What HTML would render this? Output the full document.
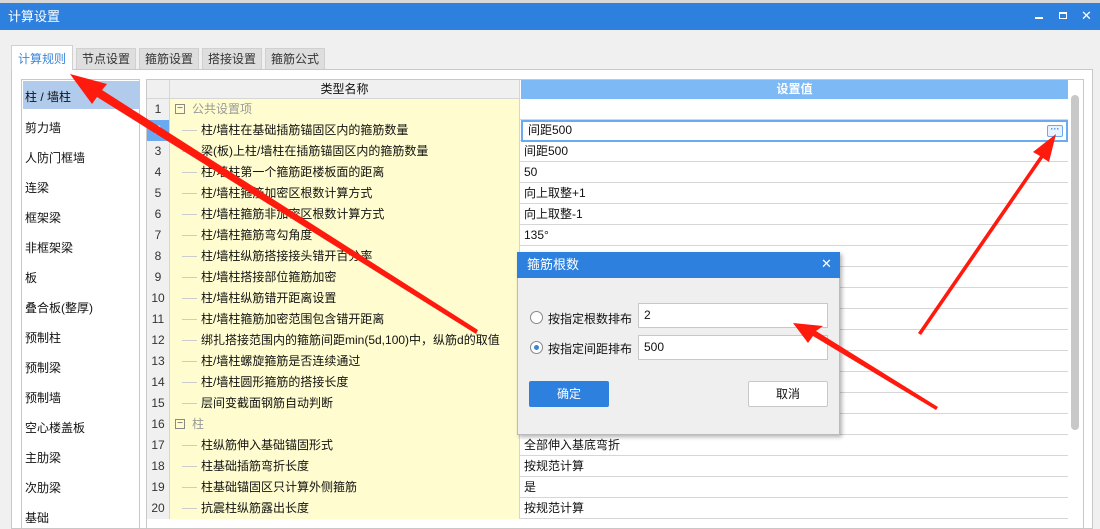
<!DOCTYPE html><html><head><meta charset="utf-8"><style>
*{margin:0;padding:0;box-sizing:border-box}
body{width:1100px;height:517px;overflow:hidden;background:#f0f0f0;font-family:"Liberation Sans","Noto Sans CJK SC",sans-serif;font-size:12px;color:#111;position:relative}
.a{position:absolute}
.tab{position:absolute;top:48px;height:21px;background:#dedede;border:1px solid #d0d0d0;border-bottom:none;text-align:center;line-height:20px;color:#333}
.li{position:absolute;left:25px;font-size:12px}
.row{position:absolute;left:147px;width:921px;height:21px;border-bottom:1px solid #d6d6d6}
.rn{position:absolute;left:0;width:23px;height:21px;background:#f0f0f0;border-right:1px solid #d6d6d6;text-align:center;line-height:21px;color:#333}
.nm{position:absolute;left:23px;width:350px;height:21px;background:#fffdcf;border-right:1px solid #d6d6d6;line-height:21px}
.nm i{position:absolute;left:12px;top:10px;width:15px;border-top:1px solid #ccc}
.nm b{font-weight:normal;position:absolute;left:31px}
.vl{position:absolute;left:374px;line-height:21px;padding-left:3px}
.box{position:absolute;border:1px solid #c8c8c8;background:#fff;padding-left:5px;line-height:23px;font-size:12px}
</style></head><body>
<div class="a" style="left:0;top:0;width:1100px;height:3px;background:#d8d8d8"></div>
<div class="a" style="left:0;top:3px;width:1100px;height:27px;background:#2e80df;color:#fff;font-size:13px;line-height:27px;padding-left:8px">计算设置</div>
<div class="a" style="left:1035px;top:17px;width:8px;height:2px;background:#fff"></div>
<div class="a" style="left:1059px;top:12px;width:8px;height:7px;border:1px solid #fff;border-top-width:2px"></div>
<div class="a" style="left:1081px;top:8px;color:#fff;font-size:13px">✕</div>
<div class="a" style="left:11px;top:69px;width:1082px;height:460px;background:#fff;border:1px solid #c8c8c8"></div>
<div class="tab" style="left:11px;width:62px;top:45px;height:25px;background:#fff;color:#3b86d8;line-height:26px">计算规则</div>
<div class="tab" style="left:76px;width:60px">节点设置</div>
<div class="tab" style="left:139px;width:60px">箍筋设置</div>
<div class="tab" style="left:202px;width:60px">搭接设置</div>
<div class="tab" style="left:265px;width:60px">箍筋公式</div>
<div class="a" style="left:21px;top:79px;width:119px;height:450px;border:1px solid #c8c8c8;background:#fff"></div>
<div class="a" style="left:23px;top:81px;width:116px;height:28px;background:#b1cbec"></div>
<div class="li" style="top:88px">柱 / 墙柱</div>
<div class="li" style="top:119px">剪力墙</div>
<div class="li" style="top:149px">人防门框墙</div>
<div class="li" style="top:179px">连梁</div>
<div class="li" style="top:209px">框架梁</div>
<div class="li" style="top:239px">非框架梁</div>
<div class="li" style="top:269px">板</div>
<div class="li" style="top:299px">叠合板(整厚)</div>
<div class="li" style="top:329px">预制柱</div>
<div class="li" style="top:359px">预制梁</div>
<div class="li" style="top:389px">预制墙</div>
<div class="li" style="top:419px">空心楼盖板</div>
<div class="li" style="top:449px">主肋梁</div>
<div class="li" style="top:479px">次肋梁</div>
<div class="li" style="top:509px">基础</div>
<div class="a" style="left:146px;top:79px;width:938px;height:450px;border:1px solid #c8c8c8;background:#fff"></div>
<div class="a" style="left:147px;top:80px;width:23px;height:19px;background:#f0f0f0;border-right:1px solid #d6d6d6;border-bottom:1px solid #d6d6d6"></div>
<div class="a" style="left:170px;top:80px;width:350px;height:19px;background:#f0f0f0;border-right:1px solid #d6d6d6;border-bottom:1px solid #d6d6d6;text-align:center;line-height:19px">类型名称</div>
<div class="a" style="left:521px;top:80px;width:547px;height:19px;background:#7db9f5;color:#fff;text-align:center;line-height:19px;font-weight:bold">设置值</div>
<div class="a" style="left:1071px;top:95px;width:8px;height:335px;background:#c8c8c8;border-radius:4px"></div>
<div id="rows"></div>
<script>
var d=[["⊟公共设置项",""],["柱/墙柱在基础插筋锚固区内的箍筋数量","间距500"],["梁(板)上柱/墙柱在插筋锚固区内的箍筋数量","间距500"],["柱/墙柱第一个箍筋距楼板面的距离","50"],["柱/墙柱箍筋加密区根数计算方式","向上取整+1"],["柱/墙柱箍筋非加密区根数计算方式","向上取整-1"],["柱/墙柱箍筋弯勾角度","135°"],["柱/墙柱纵筋搭接接头错开百分率",""],["柱/墙柱搭接部位箍筋加密",""],["柱/墙柱纵筋错开距离设置",""],["柱/墙柱箍筋加密范围包含错开距离",""],["绑扎搭接范围内的箍筋间距min(5d,100)中，纵筋d的取值",""],["柱/墙柱螺旋箍筋是否连续通过",""],["柱/墙柱圆形箍筋的搭接长度",""],["层间变截面钢筋自动判断",""],["⊟柱",""],["柱纵筋伸入基础锚固形式","全部伸入基底弯折"],["柱基础插筋弯折长度","按规范计算"],["柱基础锚固区只计算外侧箍筋","是"],["抗震柱纵筋露出长度","按规范计算"]];
var h="";for(var i=0;i<d.length;i++){var t=99+i*21,n=d[i][0],nm;
if(n[0]=="⊟")nm='<span style="position:absolute;left:5px;top:5px;width:10px;height:10px;border:1px solid #888;font-size:10px;line-height:7px;text-align:center;color:#555">−</span><span style="position:absolute;left:22px;color:#999">'+n.slice(1)+'</span>';
else nm='<i></i><b>'+n+'</b>';
h+='<div class="row" style="top:'+t+'px"><div class="rn"'+(i==1?' style="background:#6aaaf0;color:#fff"':'')+'>'+(i+1)+'</div><div class="nm">'+nm+'</div><div class="vl"'+(i==1?' style="padding-left:7px"':'')+'>'+d[i][1]+'</div></div>';}
document.getElementById("rows").innerHTML=h;
</script>
<div class="a" style="left:521px;top:120px;width:547px;height:22px;border:2px solid #6aaaf0"></div>
<div class="a" style="left:1047px;top:125px;width:16px;height:12px;border:1px solid #6aaaf0;border-radius:2px;background:#eaf3fd;color:#3b86d8;font-size:9px;line-height:6px;text-align:center;font-weight:bold">···</div>
<div class="a" style="left:517px;top:252px;width:323px;height:183px;background:#efefef;border:1px solid #bbb;box-shadow:2px 2px 4px rgba(0,0,0,.3)"></div>
<div class="a" style="left:517px;top:252px;width:323px;height:26px;background:#2e80df;color:#fff;font-size:13px;line-height:26px;padding-left:10px">箍筋根数</div>
<div class="a" style="left:821px;top:256px;color:#fff;font-size:13px">✕</div>
<div class="a" style="left:530px;top:311px;width:13px;height:13px;border:1px solid #888;border-radius:50%;background:#fff"></div>
<div class="a" style="left:530px;top:341px;width:13px;height:13px;border:1px solid #888;border-radius:50%;background:#fff"><div style="margin:3px;width:5px;height:5px;border-radius:50%;background:#3b86d8"></div></div>
<div class="a" style="left:548px;top:310px">按指定根数排布</div>
<div class="a" style="left:548px;top:340px">按指定间距排布</div>
<div class="box" style="left:638px;top:303px;width:190px;height:25px">2</div>
<div class="box" style="left:638px;top:335px;width:190px;height:25px">500</div>
<div class="a" style="left:529px;top:381px;width:80px;height:26px;background:#2e80df;border-radius:2px;color:#fff;text-align:center;line-height:26px">确定</div>
<div class="a" style="left:748px;top:381px;width:80px;height:26px;background:#fff;border:1px solid #c8c8c8;border-radius:2px;text-align:center;line-height:24px">取消</div>
<svg class="a" style="left:0;top:0" width="1100" height="517">
<g fill="#ff1a0e">
<polygon points="478,330 102,90 107,84 70,74 92,104 97,97 476,334"/>
<polygon points="918,333 1040,156 1033,152 1056,134 1049,162 1043,158 921,335"/>
<polygon points="936,410 813,336 808,343 793,323 823,326 816,331 938,407"/>
</g></svg>
</body></html>
